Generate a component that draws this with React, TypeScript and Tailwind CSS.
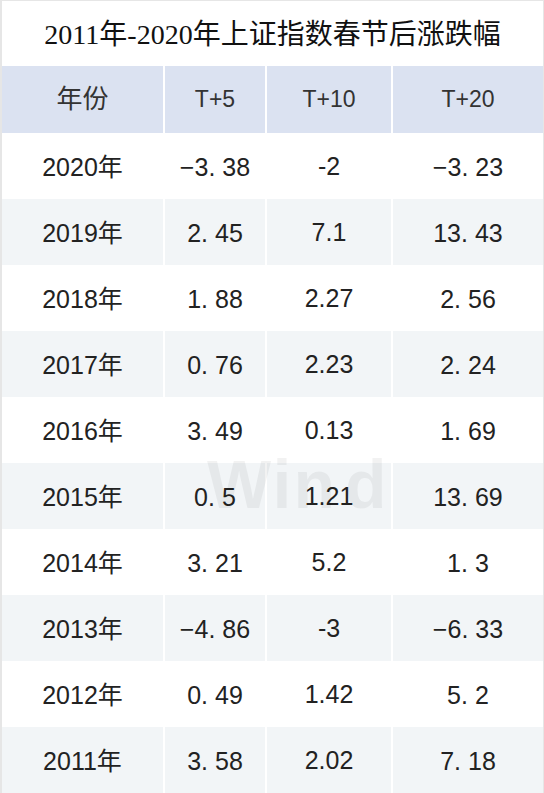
import React from "react";

const rows: [string, string, string, string][] = [
  ["2020年", "−3.38", "-2", "−3.23"],
  ["2019年", "2.45", "7.1", "13.43"],
  ["2018年", "1.88", "2.27", "2.56"],
  ["2017年", "0.76", "2.23", "2.24"],
  ["2016年", "3.49", "0.13", "1.69"],
  ["2015年", "0.5", "1.21", "13.69"],
  ["2014年", "3.21", "5.2", "1.3"],
  ["2013年", "−4.86", "-3", "−6.33"],
  ["2012年", "0.49", "1.42", "5.2"],
  ["2011年", "3.58", "2.02", "7.18"],
];

function Wide({ v }: { v: string }) {
  const parts = v.split(".");
  if (parts.length === 1) return <>{v}</>;
  return (
    <>
      {parts[0]}
      <span className="mr-[7px]">.</span>
      {parts[1]}
    </>
  );
}

export default function App() {
  const font = { fontFamily: '"Liberation Sans", "Noto Sans CJK SC", sans-serif' };
  return (
    <div className="relative w-[544px] h-[793px] bg-white overflow-hidden border-l-2 border-t border-r border-[#e6e6e6]" style={font}>
      <div
        className="h-[65px] flex items-center justify-center text-[28px] text-[#111] pt-[2px]"
        style={{ fontFamily: '"Liberation Serif", "Noto Sans CJK SC", serif' }}
      >
        2011年-2020年上证指数春节后涨跌幅
      </div>
      <div className="grid grid-cols-[163px_102px_126px_1fr] h-[67px] bg-[#dbe2f1] text-[#333]">
        <div className="flex items-center justify-center text-[26px] border-r-2 border-white">年份</div>
        <div className="flex items-center justify-center text-[23px] border-r-2 border-white">T+5</div>
        <div className="flex items-center justify-center text-[23px] border-r-2 border-white">T+10</div>
        <div className="flex items-center justify-center text-[23px]">T+20</div>
      </div>
      {rows.map((r, i) => (
        <div
          key={r[0]}
          className={`grid grid-cols-[163px_102px_126px_1fr] h-[66px] text-[#222] ${i % 2 === 1 ? "bg-[#f2f5f7]" : "bg-white"}`}
        >
          <div className="flex items-center justify-center text-[25px] pt-[3px] border-r-2 border-white">{r[0]}</div>
          <div className="flex items-center justify-center text-[25px] pt-[3px] border-r-2 border-white">
            <Wide v={r[1]} />
          </div>
          <div className="flex items-center justify-center text-[25px] pt-[1px] border-r-2 border-white">{r[2]}</div>
          <div className="flex items-center justify-center text-[25px] pt-[3px]">
            <Wide v={r[3]} />
          </div>
        </div>
      ))}
      <div
        className="absolute left-[205px] top-[432px] text-[68px] font-bold text-black/[0.05] tracking-[2px] pointer-events-none select-none"
        style={{ fontFamily: '"Liberation Sans", sans-serif' }}
      >
        Win<span className="ml-[8px]">d</span>
      </div>
    </div>
  );
}
